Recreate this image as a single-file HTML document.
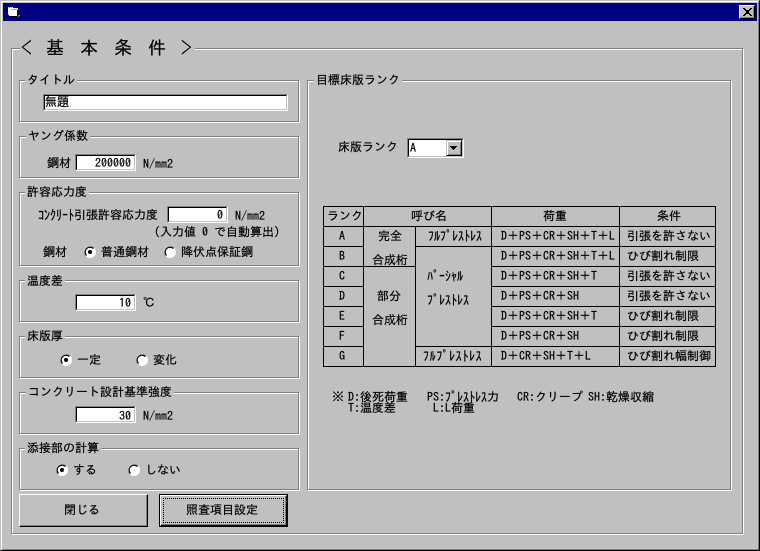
<!DOCTYPE html>
<html lang="ja"><head><meta charset="utf-8"><title>基本条件</title>
<style>
html,body{margin:0;padding:0;background:#c0c0c0;}
#w{position:relative;width:760px;height:551px;overflow:hidden;background:#c0c0c0;font:12px/12px "IPAGothic","Liberation Mono","Noto Sans CJK JP",monospace;color:#000;-webkit-text-stroke:.2px #000;}
#w div,#w span,#w svg{position:absolute;}
.t{white-space:pre;line-height:12px;}
.k{white-space:pre;font-size:14px;line-height:14px;transform:scaleX(.857);transform-origin:0 0;}
.g{border:1px solid #808080;box-shadow:1px 1px 0 #fff,inset 1px 1px 0 #fff;}
.l{background:#c0c0c0;padding:0 2px;white-space:pre;line-height:12px;}
.i{background:#fff;box-sizing:border-box;border:1px solid;border-color:#808080 #fff #fff #808080;}
.i:before{content:"";position:absolute;left:0;top:0;right:0;bottom:0;border:1px solid;border-color:#000 #c0c0c0 #c0c0c0 #000;}
.r{text-align:right;}
.big{font-size:18px;line-height:18px;white-space:pre;}
</style></head><body>
<div id="w">
<div style="left:0;top:0;width:760px;height:551px;box-sizing:border-box;border:1px solid;border-color:#c0c0c0 #000 #000 #c0c0c0;"></div>
<div style="left:1px;top:1px;width:758px;height:549px;box-sizing:border-box;border:1px solid;border-color:#fff #808080 #808080 #fff;"></div>
<div style="left:3px;top:3px;width:754px;height:18px;background:#000080;"></div>
<svg style="left:7px;top:7px" width="14" height="11" viewBox="0 0 14 11" shape-rendering="crispEdges"><path d="M1 0h5v1h5v2h-1v6H2L1 7z" fill="#fff"/><path d="M1 0h4v1H1zM4 2h6v1H4z" fill="#00ffff"/><path d="M0 1h1v6H0zM1 8h1v1H1zM2 9h8v1H2z" fill="#000"/><path d="M11 8h2v1h-2zM11 9h1v1h-1z" fill="#808080"/></svg>
<div style="left:739px;top:5px;width:16px;height:14px;box-sizing:border-box;background:#c0c0c0;border:1px solid;border-color:#fff #000 #000 #fff;box-shadow:inset -1px -1px 0 #808080;"></div>
<svg style="left:743px;top:8px" width="9" height="8" viewBox="0 0 9 8" shape-rendering="crispEdges"><path d="M0 0h2v1h1v1h3V1h1V0h2v1H8v1H7v1H6v2h1v1h1v1h1v1H7V7H6V6H3v1H2v1H0V7h1V6h1V5h1V3H2V2H1V1H0z" fill="#000"/></svg>

<div class="g" style="left:11px;top:48px;width:730px;height:484px;"></div>
<div style="left:20px;top:40px;width:175px;height:18px;background:#c0c0c0;"></div>
<span class="big" style="left:21px;top:39px;transform:scaleX(.6);transform-origin:0 0;">＜</span>
<span class="big" style="left:46px;top:39px;">基</span>
<span class="big" style="left:80px;top:39px;">本</span>
<span class="big" style="left:114px;top:39px;">条</span>
<span class="big" style="left:148px;top:39px;">件</span>
<span class="big" style="left:181px;top:39px;transform:scaleX(.6);transform-origin:0 0;">＞</span>

<div class="g" style="left:19px;top:80px;width:278px;height:40px;"></div>
<span class="l" style="left:25px;top:74px;">タイトル</span>
<div class="i" style="left:43px;top:94px;width:245px;height:17px;"></div>
<span class="t" style="left:45px;top:96px;">無題</span>

<div class="g" style="left:19px;top:136px;width:278px;height:40px;"></div>
<span class="l" style="left:26px;top:130px;">ヤング係数</span>
<span class="t" style="left:47px;top:157px;">鋼材</span>
<div class="i" style="left:75px;top:154px;width:61px;height:17px;"></div>
<span class="t r" style="left:76px;top:157px;width:55px;">200000</span>
<span class="t" style="left:143px;top:158px;">N/mm2</span>

<div class="g" style="left:19px;top:192px;width:278px;height:72px;"></div>
<span class="l" style="left:25px;top:186px;">許容応力度</span>
<span class="k" style="left:38px;top:208px;">ｺﾝｸﾘｰﾄ</span>
<span class="t" style="left:74px;top:209px;">引張許容応力度</span>
<div class="i" style="left:167px;top:206px;width:61px;height:17px;"></div>
<span class="t r" style="left:168px;top:209px;width:55px;">0</span>
<span class="t" style="left:235px;top:210px;">N/mm2</span>
<span class="t" style="left:148px;top:226px;">（入力値 0 で自動算出）</span>
<span class="t" style="left:43px;top:246px;">鋼材</span>
<span class="t" style="left:101px;top:246px;">普通鋼材</span>
<span class="t" style="left:181px;top:246px;">降伏点保証鋼</span>

<div class="g" style="left:19px;top:280px;width:278px;height:40px;"></div>
<span class="l" style="left:25px;top:275px;">温度差</span>
<div class="i" style="left:75px;top:294px;width:61px;height:17px;"></div>
<span class="t r" style="left:76px;top:297px;width:55px;">10</span>
<span class="t" style="left:143px;top:297px;">℃</span>

<div class="g" style="left:19px;top:336px;width:278px;height:40px;"></div>
<span class="l" style="left:25px;top:330px;">床版厚</span>
<span class="t" style="left:77px;top:354px;">一定</span>
<span class="t" style="left:153px;top:354px;">変化</span>

<div class="g" style="left:19px;top:392px;width:278px;height:40px;"></div>
<span class="l" style="left:26px;top:386px;">コンクリート設計基準強度</span>
<div class="i" style="left:75px;top:406px;width:61px;height:17px;"></div>
<span class="t r" style="left:76px;top:410px;width:55px;">30</span>
<span class="t" style="left:143px;top:410px;">N/mm2</span>

<div class="g" style="left:19px;top:448px;width:278px;height:40px;"></div>
<span class="l" style="left:25px;top:442px;">添接部の計算</span>
<span class="t" style="left:73px;top:464px;">する</span>
<span class="t" style="left:145px;top:464px;">しない</span>

<svg style="left:0;top:0" width="760" height="551" viewBox="0 0 760 551">
<defs><g id="rd"><circle r="6" fill="#fff"/><path d="M-4.2 4.2A6 6 0 0 1 4.2-4.2" fill="none" stroke="#808080" stroke-width="1"/><path d="M-3.4 3.4A4.8 4.8 0 0 1 3.4-3.4" fill="none" stroke="#000" stroke-width="1"/></g></defs>
<use href="#rd" x="90" y="252"/><circle cx="90" cy="252" r="2" fill="#000"/>
<use href="#rd" x="170" y="252"/>
<use href="#rd" x="66" y="360"/><circle cx="66" cy="360" r="2" fill="#000"/>
<use href="#rd" x="142" y="360"/>
<use href="#rd" x="62" y="470"/><circle cx="62" cy="470" r="2" fill="#000"/>
<use href="#rd" x="134" y="470"/>
</svg>

<div style="left:19px;top:494px;width:129px;height:33px;box-sizing:border-box;background:#c0c0c0;border:1px solid;border-color:#fff #000 #000 #fff;box-shadow:inset -1px -1px 0 #808080;"></div>
<span class="t" style="left:64px;top:504px;">閉じる</span>
<div style="left:159px;top:494px;width:129px;height:33px;box-sizing:border-box;background:#c0c0c0;border:1px solid #000;"></div>
<div style="left:160px;top:495px;width:127px;height:31px;box-sizing:border-box;border:1px solid;border-color:#fff #000 #000 #fff;box-shadow:inset -1px -1px 0 #808080;"></div>
<div style="left:163px;top:498px;width:121px;height:25px;box-sizing:border-box;border:1px dotted #000;"></div>
<span class="t" style="left:186px;top:504px;">照査項目設定</span>

<div class="g" style="left:307px;top:80px;width:422px;height:408px;"></div>
<span class="l" style="left:314px;top:74px;">目標床版ランク</span>
<span class="t" style="left:338px;top:141px;">床版ランク</span>
<div class="i" style="left:407px;top:138px;width:57px;height:20px;"></div>
<span class="t" style="left:410px;top:142px;">A</span>
<div style="left:446px;top:140px;width:16px;height:16px;box-sizing:border-box;background:#c0c0c0;border:1px solid;border-color:#c0c0c0 #000 #000 #c0c0c0;box-shadow:inset 1px 1px 0 #fff,inset -1px -1px 0 #808080;"></div>
<svg style="left:450px;top:146px" width="8" height="4" viewBox="0 0 8 4" shape-rendering="crispEdges"><path d="M0 0h7v1H6v1H5v1H4v1H3V3H2V2H1V1H0z" fill="#000"/></svg>

<svg style="left:0;top:0" width="760" height="551" viewBox="0 0 760 551" shape-rendering="crispEdges">
<path fill="none" stroke="#000" stroke-width="1" d="M323 206.500H716M323 226.500H716M323 246.500H363M415 246.500H716M323 266.500H415M491 266.500H716M323 286.500H363M491 286.500H716M323 306.500H363M491 306.500H716M323 326.500H363M491 326.500H716M323 346.500H363M415 346.500H716M323 366.500H716M323.500 206V367M363.500 206V367M415.500 226V367M491.500 206V367M619.500 206V367M715.500 206V367"/>
</svg>

<span class="t" style="left:327px;top:210px;">ランク</span>
<span class="t" style="left:411px;top:210px;">呼び名</span>
<span class="t" style="left:543px;top:210px;">荷重</span>
<span class="t" style="left:657px;top:210px;">条件</span>

<span class="t" style="left:339px;top:230px;">A</span>
<span class="t" style="left:339px;top:250px;">B</span>
<span class="t" style="left:339px;top:270px;">C</span>
<span class="t" style="left:339px;top:290px;">D</span>
<span class="t" style="left:339px;top:310px;">E</span>
<span class="t" style="left:339px;top:330px;">F</span>
<span class="t" style="left:339px;top:350px;">G</span>

<span class="t" style="left:378px;top:230px;">完全</span>
<span class="t" style="left:372px;top:254px;">合成桁</span>
<span class="t" style="left:377px;top:290px;">部分</span>
<span class="t" style="left:372px;top:314px;">合成桁</span>

<span class="k" style="left:428px;top:229px;">ﾌﾙﾌﾟﾚｽﾄﾚｽ</span>
<span class="k" style="left:427px;top:269px;">ﾊﾟｰｼｬﾙ</span>
<span class="k" style="left:427px;top:293px;">ﾌﾟﾚｽﾄﾚｽ</span>
<span class="k" style="left:423px;top:349px;letter-spacing:.78px;">ﾌﾙﾌﾟﾚｽﾄﾚｽ</span>

<span class="t" style="left:501px;top:230px;">D＋PS＋CR＋SH＋T＋L</span>
<span class="t" style="left:501px;top:250px;">D＋PS＋CR＋SH＋T＋L</span>
<span class="t" style="left:501px;top:270px;">D＋PS＋CR＋SH＋T</span>
<span class="t" style="left:501px;top:290px;">D＋PS＋CR＋SH</span>
<span class="t" style="left:501px;top:310px;">D＋PS＋CR＋SH＋T</span>
<span class="t" style="left:501px;top:330px;">D＋PS＋CR＋SH</span>
<span class="t" style="left:501px;top:350px;">D＋CR＋SH＋T＋L</span>

<span class="t" style="left:627px;top:230px;">引張を許さない</span>
<span class="t" style="left:627px;top:250px;">ひび割れ制限</span>
<span class="t" style="left:627px;top:270px;">引張を許さない</span>
<span class="t" style="left:627px;top:290px;">引張を許さない</span>
<span class="t" style="left:627px;top:310px;">ひび割れ制限</span>
<span class="t" style="left:627px;top:330px;">ひび割れ制限</span>
<span class="t" style="left:627px;top:350px;">ひび割れ幅制御</span>

<span class="t" style="left:332px;top:391px;">※</span>
<span class="t" style="left:348px;top:391px;">D:後死荷重</span>
<span class="t" style="left:427px;top:391px;">PS:</span>
<span class="k" style="left:445px;top:390px;">ﾌﾟﾚｽﾄﾚｽ</span>
<span class="t" style="left:487px;top:391px;">力</span>
<span class="t" style="left:517px;top:391px;">CR:クリープ</span>
<span class="t" style="left:588px;top:391px;">SH:乾燥収縮</span>
<span class="t" style="left:348px;top:402px;">T:温度差</span>
<span class="t" style="left:433px;top:402px;">L:L荷重</span>
</div>
</body></html>
